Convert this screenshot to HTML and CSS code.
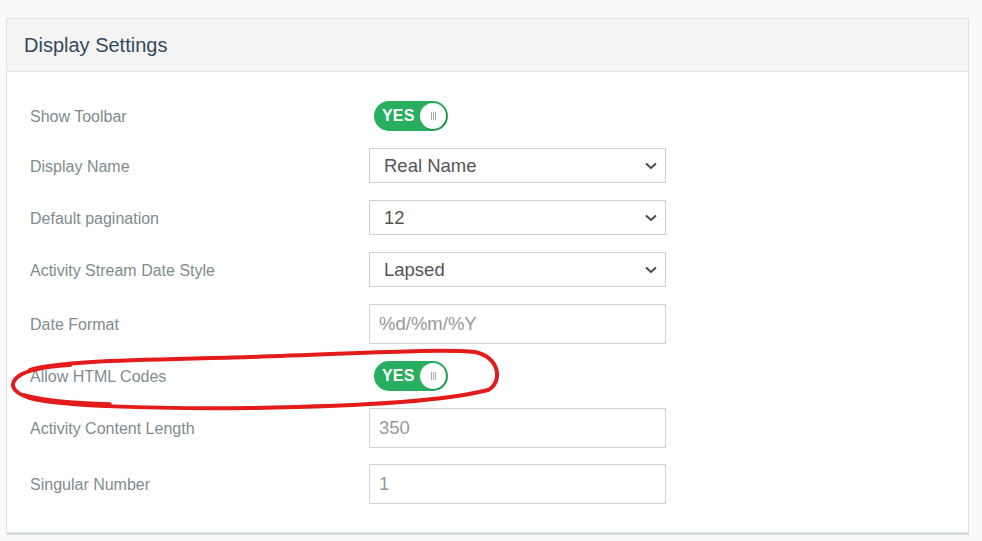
FILE: index.html
```html
<!DOCTYPE html>
<html>
<head>
<meta charset="utf-8">
<link rel="stylesheet" href="styles.css">
</head>
<body>
<div class="panel">
  <div class="panel-head">Display Settings</div>
  <div class="panel-body">
    <div class="row row-toggle">
      <div class="label">Show Toolbar</div>
      <div class="toggle"><span class="toggle-text">YES</span><span class="knob"><span class="grip"></span></span></div>
    </div>
    <div class="row row-select">
      <div class="label">Display Name</div>
      <div class="select"><span>Real Name</span><svg class="chev" width="12" height="8" viewBox="0 0 12 8"><path d="M1 1.5 L6 6 L11 1.5" fill="none" stroke="#444" stroke-width="1.8"/></svg></div>
    </div>
    <div class="row row-select">
      <div class="label">Default pagination</div>
      <div class="select"><span>12</span><svg class="chev" width="12" height="8" viewBox="0 0 12 8"><path d="M1 1.5 L6 6 L11 1.5" fill="none" stroke="#444" stroke-width="1.8"/></svg></div>
    </div>
    <div class="row row-select">
      <div class="label">Activity Stream Date Style</div>
      <div class="select"><span>Lapsed</span><svg class="chev" width="12" height="8" viewBox="0 0 12 8"><path d="M1 1.5 L6 6 L11 1.5" fill="none" stroke="#444" stroke-width="1.8"/></svg></div>
    </div>
    <div class="row row-input">
      <div class="label">Date Format</div>
      <input class="input" type="text" value="%d/%m/%Y">
    </div>
    <div class="row row-toggle">
      <div class="label">Allow HTML Codes</div>
      <div class="toggle"><span class="toggle-text">YES</span><span class="knob"><span class="grip"></span></span></div>
    </div>
    <div class="row row-input tight">
      <div class="label">Activity Content Length</div>
      <input class="input" type="text" value="350">
    </div>
    <div class="row row-input last">
      <div class="label">Singular Number</div>
      <input class="input" type="text" value="1">
    </div>
  </div>
</div>
<svg class="scribble" width="520" height="80" viewBox="0 0 520 80">
  <path d="M30 30 C60 20, 150 20, 250 17 S440 8, 475 12 C500 17, 503 42, 488 50 C450 60, 380 66, 250 68 C150 69, 60 66, 30 58 C10 52, 8 42, 22 34 C35 28, 50 26, 70 25" fill="none" stroke="#e31b1b" stroke-width="4" stroke-linecap="round" stroke-linejoin="round"/>
  <path d="M24 55 C45 61, 70 63, 110 64" fill="none" stroke="#e31b1b" stroke-width="3.5" stroke-linecap="round"/>
</svg>
</body>
</html>
```
FILE: styles.css
```css
html, body {
  margin: 0;
  padding: 0;
}
body {
  background: #fafafa;
  font-family: "Liberation Sans", Arial, sans-serif;
  padding: 18px 0 0 6px;
  position: relative;
  height: 541px;
  box-sizing: border-box;
  overflow: hidden;
}
.panel {
  width: 963px;
  box-sizing: border-box;
  border: 1px solid #dde4e6;
  border-bottom: 3px solid #d9e0e2;
  background: #fff;
}
.panel-head {
  height: 52px;
  line-height: 52px;
  padding: 0 17px;
  background: #f4f4f4;
  border-bottom: 1px solid #e2e4e4;
  font-size: 20px;
  color: #34495e;
}
.panel-body {
  padding: 29px 0 28px 23px;
}
.row {
  display: grid;
  grid-template-columns: 339px 297px;
  align-items: center;
  margin-bottom: 17px;
}
.row.tight {
  margin-bottom: 16px;
}
.row.last {
  margin-bottom: 0;
}
.row-toggle { height: 30px; }
.row-select { height: 35px; }
.row-input { height: 40px; }
.label {
  font-size: 16px;
  color: #7f8c8d;
  padding-top: 2px;
}
.toggle {
  margin-left: 5px;
  width: 74px;
  height: 30px;
  border-radius: 15px;
  background: #27ae60;
  display: flex;
  align-items: center;
  justify-content: space-between;
  box-sizing: border-box;
  padding: 0 2px 0 8px;
}
.toggle-text {
  color: #fff;
  font-weight: bold;
  font-size: 16px;
  letter-spacing: 0.2px;
}
.knob {
  width: 26px;
  height: 26px;
  border-radius: 50%;
  background: #fff;
  box-shadow: 1px 1px 1px #1b8a48;
  display: flex;
  align-items: center;
  justify-content: center;
}
.grip {
  width: 5px;
  height: 8px;
  border-left: 1px solid #aaa;
  border-right: 1px solid #aaa;
  position: relative;
  box-sizing: border-box;
}
.grip::after {
  content: "";
  position: absolute;
  left: 1px;
  top: 0;
  width: 1px;
  height: 8px;
  background: #aaa;
}
.select {
  height: 35px;
  box-sizing: border-box;
  border: 1px solid #cfcfcf;
  background: #fff;
  display: flex;
  align-items: center;
  justify-content: space-between;
  padding: 0 8px 0 14px;
  font-size: 18.5px;
  color: #555;
}
.chev {
  display: block;
}
.input {
  height: 40px;
  width: 297px;
  box-sizing: border-box;
  border: 1px solid #d2d2d2;
  background: #fff;
  padding: 0 9px;
  margin: 0;
  font-family: "Liberation Sans", Arial, sans-serif;
  font-size: 18.5px;
  color: #999;
  outline: none;
}
.scribble {
  position: absolute;
  left: 0;
  top: 340px;
}
```
